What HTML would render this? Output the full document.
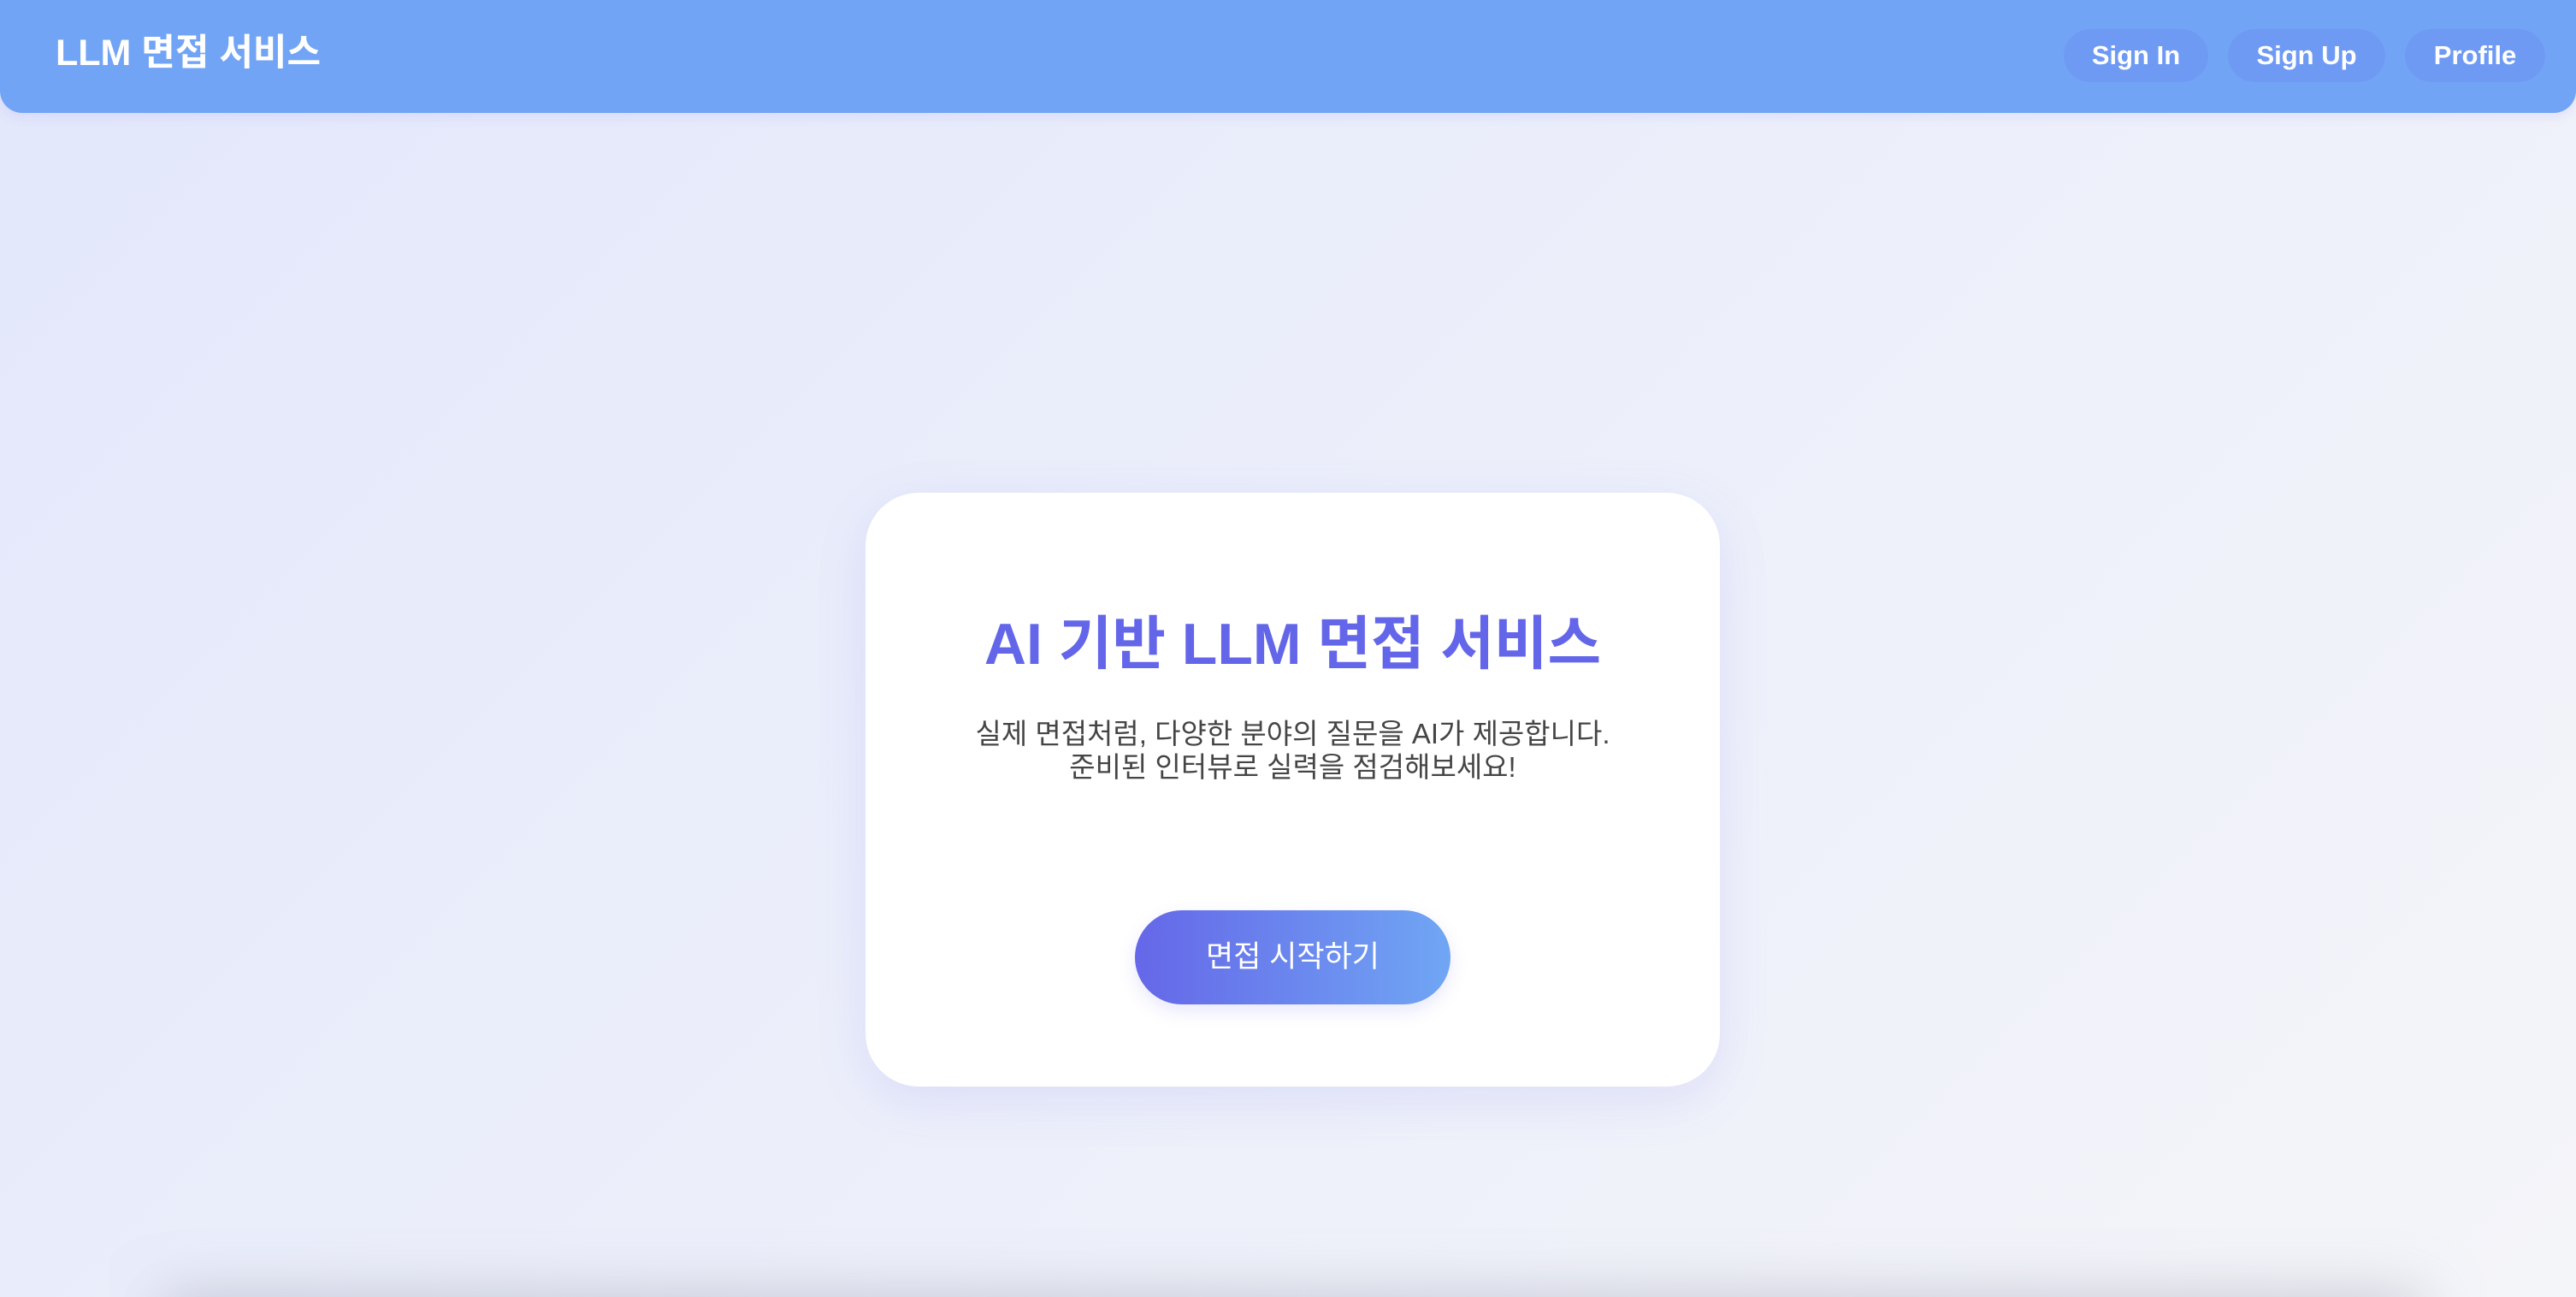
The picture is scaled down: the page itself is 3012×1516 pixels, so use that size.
<!DOCTYPE html>
<html><head><meta charset="utf-8"><style>
html,body{margin:0;padding:0;width:3012px;height:1516px;overflow:hidden}
body{background:linear-gradient(135deg,#e3e7fb 0%,#eceffa 50%,#f4f5f9 100%);font-family:"Liberation Sans","Noto Sans CJK KR",sans-serif;position:relative}
.hdr{position:absolute;left:0;top:0;width:3012px;height:132px;background:#72a4f5;border-radius:0 0 26px 26px;box-shadow:0 4px 14px rgba(99,102,241,0.12)}
.logo{position:absolute;left:65px;top:37px;font-size:43px;font-weight:700;color:#fff;line-height:50px}
.btn{position:absolute;top:34px;height:62px;border-radius:31px;background:rgba(99,102,241,0.14);color:#fff;font-weight:700;font-size:31px;line-height:62px;text-align:center}
.card{position:absolute;left:1012px;top:576px;width:999px;height:694px;background:#fff;border-radius:62px;box-shadow:0 16px 60px rgba(99,102,241,0.13);text-align:center}
.t{position:absolute;left:0;width:100%;top:132px;font-size:68px;font-weight:700;color:#6466e9;line-height:90px}
.s{position:absolute;left:0;width:100%;top:262px;font-size:33px;color:#454545;line-height:39px}
.go{position:absolute;left:315px;top:488px;width:369px;height:110px;border-radius:55px;background:linear-gradient(90deg,#6567e8,#70a6f4);color:#fff;font-size:35px;line-height:110px;box-shadow:0 8px 20px rgba(99,102,241,0.15)}
.foot{position:absolute;left:0;top:1436px;width:3012px;height:80px;overflow:hidden}
.foot div{position:absolute;left:220px;top:114px;width:2580px;height:40px;box-shadow:0 0 70px 30px rgba(150,152,170,0.55);background:#c8cad4}
</style></head><body>
<div class="hdr">
<div class="logo">LLM 면접 서비스</div>
<div class="btn" style="left:2413px;width:169px">Sign In</div>
<div class="btn" style="left:2605px;width:184px">Sign Up</div>
<div class="btn" style="left:2812px;width:164px">Profile</div>
</div>
<div class="card">
<div class="t">AI 기반 LLM 면접 서비스</div>
<div class="s">실제 면접처럼, 다양한 분야의 질문을 AI가 제공합니다.<br>준비된 인터뷰로 실력을 점검해보세요!</div>
<div class="go">면접 시작하기</div>
</div>
<div class="foot"><div></div></div>
</body></html>
